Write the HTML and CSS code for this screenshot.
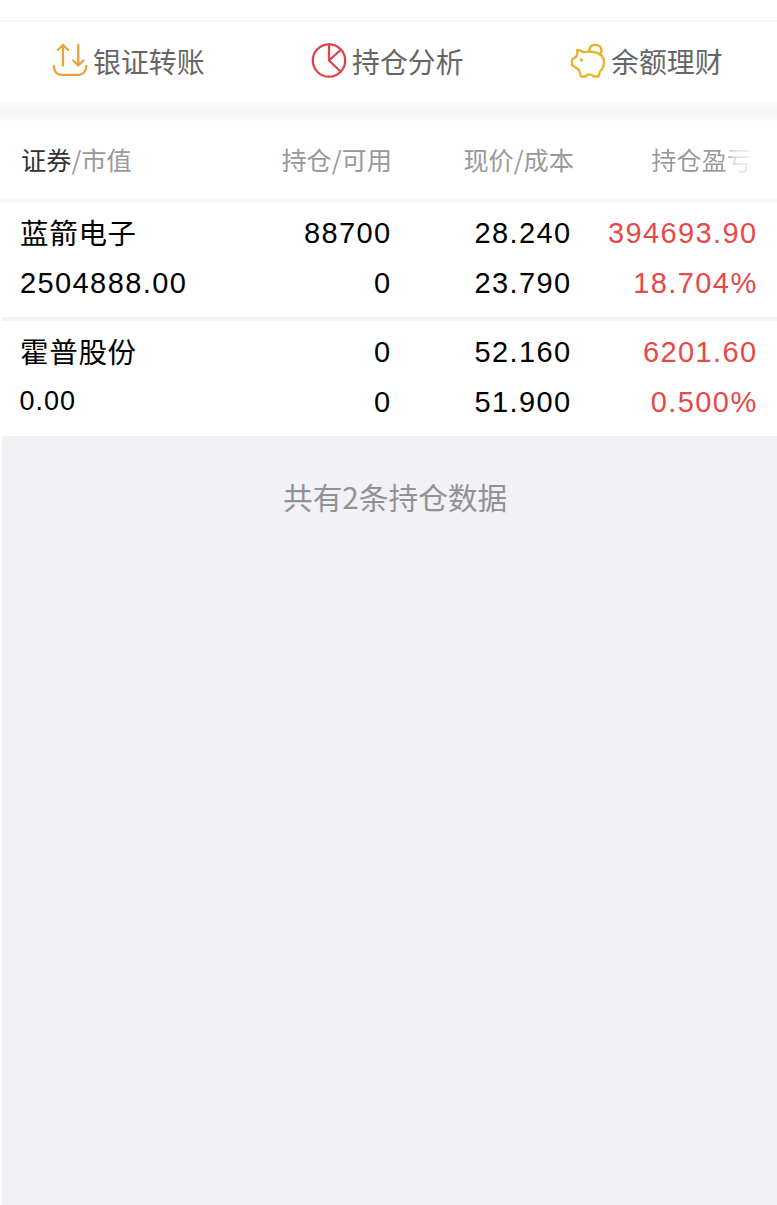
FILE: index.html
```html
<!DOCTYPE html>
<html lang="zh-CN">
<head>
<meta charset="utf-8">
<title>持仓</title>
<link rel="stylesheet" href="styles.css">
</head>
<body>
<main class="page">
  <nav class="actions">
    <a class="action action-transfer">
      <svg class="icon" viewBox="0 0 36 36" fill="none" stroke="#e9a23b" stroke-width="2.3" stroke-linecap="round" stroke-linejoin="round"><path d="M11 22.500V2M5.800 7l5.200-5 5.200 5M26.300 2v20.500M21.200 17.500l5.100 5 5.100-5"/><path d="M1.800 23c.3 6 2.700 8.800 7.700 8.800h17c5 0 7.500-2.800 7.800-8.800"/></svg>
      <span>银证转账</span>
    </a>
    <a class="action action-analysis">
      <svg class="icon" viewBox="0 0 36 36" fill="none" stroke="#dc4450" stroke-width="2.300" stroke-linecap="round" stroke-linejoin="round"><circle cx="18" cy="17.500" r="16.200"/><path d="M18 1.500v16l11.500 11M18 17.500L29 7.500"/></svg>
      <span>持仓分析</span>
    </a>
    <a class="action action-wealth">
      <svg class="icon" viewBox="0 0 36 36" fill="none" stroke="#eab22b" stroke-width="2.300" stroke-linecap="round" stroke-linejoin="round"><path d="M7 7c3 0 5 1 6.500 2.300 3-.8 6-1 9.500-.4 7 1 11 4.800 11 10.600 0 3.500-1.300 6.500-4 9l-1.500 5h-5l-1.500-1.800h-4.500l-1.500 1.800h-5l-2-6.500-4-3-3-2v-5.500l4.500-3c.8-2.200 1.300-4.300.5-6.500z"/><path d="M19 8.300c.5-4.500 3.300-6.800 6.800-6.500 5.200.3 7.500 5.500 4.200 9.500"/><circle cx="11.300" cy="17" r=".6" fill="#eab22b"/></svg>
      <span>余额理财</span>
    </a>
  </nav>
  <div class="band"></div>
  <header class="columns heading">
    <div class="security"><b>证券</b>/市值</div>
    <div class="quantity">持仓/可用</div>
    <div class="price">现价/成本</div>
    <div class="profit">持仓盈亏</div>
  </header>
  <section class="columns holding">
    <div class="name">蓝箭电子</div>
    <div>88700</div>
    <div>28.240</div>
    <div class="gain">394693.90</div>
    <div>2504888.00</div>
    <div>0</div>
    <div>23.790</div>
    <div class="gain">18.704%</div>
  </section>
  <section class="columns holding last">
    <div class="name">霍普股份</div>
    <div>0</div>
    <div>52.160</div>
    <div class="gain">6201.60</div>
    <div class="empty-value">0.00</div>
    <div>0</div>
    <div>51.900</div>
    <div class="gain">0.500%</div>
  </section>
  <footer class="summary">共有2条持仓数据</footer>
</main>
</body>
</html>
```
FILE: styles.css
```css
* { box-sizing: border-box; }
body {
  margin: 0;
  background: #fff;
  font-family: "Noto Sans CJK SC", sans-serif;
}
.page {
  display: flex;
  flex-direction: column;
  height: 1205px;
  padding-top: 20px;
  overflow: hidden;
}
.actions {
  display: grid;
  grid-template-columns: repeat(3, 259px);
  height: 82px;
  border-top: 1px solid #f5f5f5;
}
.action {
  display: flex;
  align-items: center;
  gap: 5px;
  height: 79px;
  padding-left: 52px;
  color: #666;
  font-size: 27.9px;
  line-height: 40px;
}
.icon {
  flex: none;
  width: 36px;
  height: 36px;
}
.band {
  height: 19px;
  background: linear-gradient(#fcfcfc, #f6f6f6 6px, #f6f6f6 13px, #fdfdfd);
}
.columns {
  display: grid;
  grid-template-columns: 250px 121px 180px 186px;
  padding-left: 20px;
}
.columns > :not(:nth-child(4n + 1)) { text-align: right; }
.heading {
  height: 82px;
  padding: 18px 0 0 21px;
  border-bottom: 4px solid #f8f8f8;
  color: #999;
  font-size: 25.2px;
  line-height: 40px;
}
.heading b {
  color: #333;
  font-weight: 400;
}
.heading .price { margin-right: -2px; }
.heading .profit {
  padding-right: 6px;
  color: transparent;
  background: linear-gradient(to right, #999 148px, #bbb 158px, #ddd 162px, #f0f0f0 180px);
  background-clip: text;
}
.holding {
  grid-template-rows: 50px 50px;
  height: 118px;
  margin-left: 2px;
  padding: 5px 0 0 18px;
  border-bottom: 4px solid #f1f1f6;
  color: #000;
  font-family: "Liberation Sans", Arial, sans-serif;
  font-size: 29px;
  line-height: 50px;
  letter-spacing: 1.4px;
}
.holding > :not(:nth-child(4n + 1)) { margin-right: -.6px; }
.holding.last {
  height: 115px;
  padding-top: 6px;
  border-bottom: 0;
}
.holding .name {
  font-family: "Noto Sans CJK SC", sans-serif;
  font-size: 28.5px;
  line-height: 47px;
  letter-spacing: .7px;
}
.holding .gain { color: #e84848; }
.holding .empty-value {
  margin-left: -.5px;
  font-size: 27px;
  line-height: 48px;
  letter-spacing: 1px;
}
.summary {
  flex: 1;
  margin-left: 2px;
  padding: 39px 0 0 281px;
  background: #f1f1f6;
  color: #929295;
  font-size: 29.7px;
  line-height: 44px;
}
```
